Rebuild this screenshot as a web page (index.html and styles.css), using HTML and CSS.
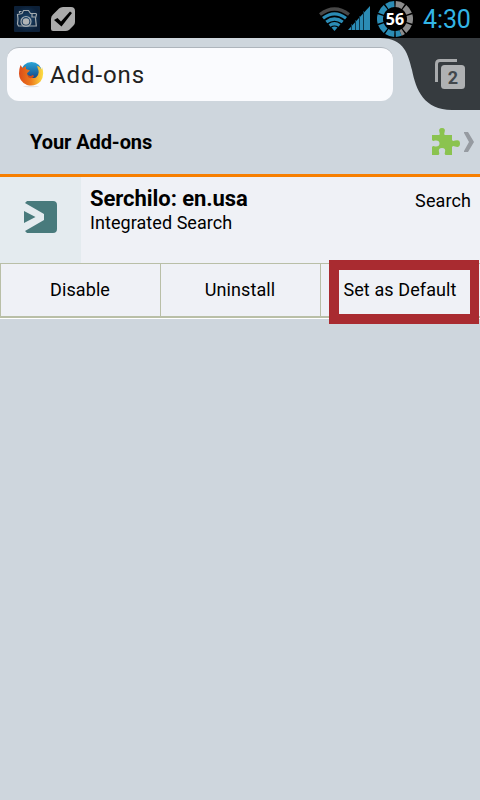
FILE: index.html
```html
<!DOCTYPE html>
<html lang="en">
<head>
<meta charset="utf-8">
<title>Add-ons</title>
<link rel="stylesheet" href="styles.css">
</head>
<body>
<div class="status">
  <svg class="camera" width="26" height="26" viewBox="0 0 26 26">
    <defs><radialGradient id="navy"><stop offset="0" stop-color="#1d4870"/><stop offset="1" stop-color="#0c2038"/></radialGradient></defs>
    <rect width="26" height="26" rx="1" fill="url(#navy)"/>
    <g fill="none" stroke="#a3abb0" stroke-width="1.2"><path d="M3.500 8.500 8 7.500 9.500 4.500h5l2 3h5.500l.5 1-1 3.500.8 8H4.500l-1-2 .5-5z"/><circle cx="12" cy="15.500" r="5"/><path d="M5.500 7V5.500h2M18 8v3h3"/></g>
    <circle cx="12" cy="15.500" r="3.300" fill="#b2b5b6"/>
  </svg>
  <svg class="check" width="24" height="25" viewBox="0 0 24 25">
    <path d="M8 1.500Q9.500 0 12 0h8q4 0 4 4v11q0 2-1.500 3.500L18 23q-1.500 1-3.500 1H2q-2 0-2-2V12q0-3 2-4.500z" fill="#ababab"/>
    <path d="M3 13 6.500 11 10 14.500 19 4.500 21 6 10.500 19.500z" fill="#000"/>
  </svg>
  <svg class="wifi" width="31" height="24" viewBox="0 0 31 24">
    <g fill="none" stroke-width="3.200"><path d="M1 7.500Q15.500-3.500 30 7.500" stroke="#484848"/><g stroke="#2b8cb5"><path d="M4 11.200Q15.500 2.500 27 11.200M7.300 15Q15.500 9 23.700 15M10.500 18.500Q15.500 15 20.500 18.500"/></g></g>
    <path d="M12.500 20.500Q15.500 18.500 18.500 20.500L15.500 24z" fill="#2b8cb5"/>
  </svg>
  <svg class="signal" width="22" height="24" viewBox="0 0 22 24">
    <path d="M0 24 22 0v24z" fill="#2b8cb5"/>
    <path d="M3.500 18v6M7.500 14v10M11.500 10v14M15.500 5v19" stroke="#0b374c" stroke-width="1"/>
  </svg>
  <div class="battery">
    <svg width="38" height="38" viewBox="0 0 38 38">
      <g fill="none" stroke-width="6" transform="rotate(-90 19 19)">
        <circle cx="19" cy="19" r="15" pathLength="100" stroke="#8c8c8c" stroke-dasharray="0 .75 8.500 1.500 8.500 1.500 8.500 1.500 8.500 1.500 3.250 56"/>
        <circle cx="19" cy="19" r="15" pathLength="100" stroke="#2b8cb5" stroke-dasharray="0 44 5.250 1.500 8.500 1.500 8.500 1.500 8.500 1.500 8.500 1.500 8.500 .75"/>
      </g>
    </svg>
    <span>56</span>
  </div>
  <span class="clock">4:30</span>
</div>
<div class="toolbar">
  <div class="address">
    <svg width="26" height="28" viewBox="0 0 26 28">
      <defs>
        <linearGradient id="globe" x2="0" y2="1"><stop offset="0" stop-color="#2aa6d8"/><stop offset=".7" stop-color="#15518f"/></linearGradient>
        <linearGradient id="fox" x2="1" y2="0"><stop offset="0" stop-color="#dc4b18"/><stop offset=".5" stop-color="#ee7c1e"/><stop offset="1" stop-color="#fbe044"/></linearGradient>
      </defs>
      <ellipse cx="13" cy="25.500" rx="8" ry=".8" fill="#e2e2e6"/>
      <circle cx="13.500" cy="11.500" r="10.500" fill="url(#globe)"/>
      <path d="M2.500 4 4.500 7 8 5.200 8 8 12 9.500 9 12.200 10 15Q13 18 18 16.500 22 13 20 8L19 5Q22 5 23.500 9L24 6Q27 14 22.500 20.500 17 26 9 24 1 20.500 1 12.500 1 8 2.500 4z" fill="url(#fox)"/>
      <path d="M10 14Q13 16 15 13.800L16 15.500Q13 18.500 10 16z" fill="#d34e1c"/>
    </svg>
    <span>Add-ons</span>
  </div>
  <svg class="tabs" width="100" height="72" viewBox="0 0 100 72">
    <path d="M0 0C25 0 28 17 32 32 36 52 44 72 72 72h28V0z" fill="#363b3f"/>
    <path d="M56.500 44V26q0-3.500 3.500-3.500h17" fill="none" stroke="#a9abad" stroke-width="3"/>
    <rect x="61" y="27" width="24" height="24" rx="3.500" fill="#afb1b3"/>
    <text x="73" y="45.500" text-anchor="middle" class="count">2</text>
  </svg>
</div>
<div class="header">
  <h1>Your Add-ons</h1>
  <svg class="puzzle" width="30" height="30" viewBox="0 0 30 30">
    <path d="M1 8H8Q9.500 7.500 8.500 5.500 7 1 11 1T13.500 5.500Q12.500 7.500 14 8H21V13Q22 14.500 24 13.500 29 12 29 16.500T24 19.500Q22 18.500 21 20V28H14.500Q13 27 14 25 15 21 11 21T8 25Q9 27 7.500 28H1V20Q2 18.500 4 19.500 8.500 20 8.500 16.500T4 13.500Q2 14.500 1 13z" fill="#8bc34f"/>
  </svg>
  <svg class="chevron" width="10" height="20" viewBox="0 0 10 20"><path d="M0 0H4L10 10 4 20H0V19L5 10 0 1z" fill="#969ba1"/></svg>
</div>
<div class="addon">
  <div class="thumb">
    <svg width="33" height="32" viewBox="0 0 33 32"><path d="M3 0H29q4 0 4 4v24q0 4-4 4H3L1 30 20 19V13L1 2zM0 10 11.500 16 0 22z" fill="#487a7c"/></svg>
  </div>
  <div class="info"><h2>Serchilo: en.usa</h2><p>Integrated Search</p></div>
  <span class="kind">Search</span>
</div>
<div class="actions">
  <span class="disable">Disable</span>
  <span class="uninstall">Uninstall</span>
  <span class="default">Set as Default</span>
  <div class="highlight"></div>
</div>
</body>
</html>
```

FILE: styles.css
```css
* { box-sizing: border-box; }
body { margin: 0; width: 480px; height: 800px; overflow: hidden; background: #ced6dd; color: #000; font-family: Roboto, sans-serif; }
svg { display: block; flex: none; }
h1, h2, p { margin: 0; }
.status { height: 38px; background: #000; display: flex; align-items: flex-start; padding-left: 14px; }
.camera { margin-top: 6px; }
.check { margin: 7px 0 0 11px; }
.wifi { margin: 7px 0 0 244px; }
.signal { margin: 6px 0 0 -2px; }
.battery { width: 38px; height: 38px; margin-left: 6px; display: grid; }
.battery svg, .battery span { grid-area: 1 / 1; }
.battery span { align-self: center; text-align: center; color: #fff; font: bold 16px/38px "Open Sans", sans-serif; }
.clock { margin-left: 9px; font-size: 25px; line-height: 39px; letter-spacing: -.1px; color: #33b5e5; }
.toolbar { height: 72px; display: flex; justify-content: space-between; padding-left: 7px; }
.address { flex: none; width: 386px; height: 54px; margin-top: 9px; padding-left: 11px; display: flex; align-items: center; gap: 6px; background: #fafbfe; border-top: 1px solid #aeb5bc; border-radius: 12px; color: #222; font-size: 24px; letter-spacing: .9px; }
.tabs { margin-left: -13px; }
.count { font: bold 18px Roboto, sans-serif; fill: #42474c; }
.header { height: 67px; border-bottom: 3px solid #f77f00; display: flex; align-items: center; padding-left: 30px; }
.header h1 { flex: 1; font-size: 20px; line-height: 24px; letter-spacing: -.08px; }
.puzzle { margin-right: 3px; }
.chevron { margin-right: 6px; }
.addon { height: 86px; display: flex; background: #eff1f6; }
.thumb { width: 81px; padding: 24px 0 0 24px; background: #e4ebef; }
.info { flex: 1; padding: 9px 0 0 9px; }
.info h2 { font-size: 22px; line-height: 25px; letter-spacing: -.06px; }
.info p { font-size: 18px; line-height: 24px; letter-spacing: .06px; }
.kind { padding: 12px 9px 0 0; font-size: 18px; line-height: 24px; letter-spacing: .1px; }
.actions { position: relative; height: 56px; display: grid; grid-template-columns: 160px 160px 160px; background: #eff1f6; border-top: 1px solid #b9bfa7; border-bottom: 1px solid #fff; box-shadow: inset 0 -2px #b9bfa7; }
.actions span { height: 52px; border-left: 1px solid #b9bfa7; text-align: center; font-size: 18px; line-height: 52px; letter-spacing: .1px; padding-right: 1px; }
.highlight { position: absolute; left: 329px; top: -4px; width: 150px; height: 64px; border: 10px solid #a92b30; border-right-width: 9px; }
```
